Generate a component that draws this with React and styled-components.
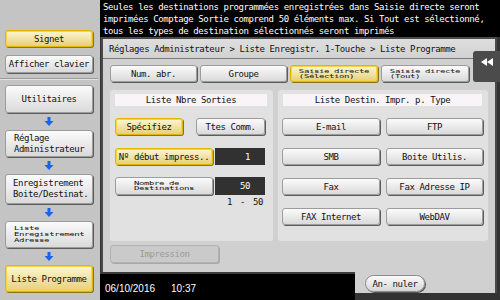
import React from 'react';
import styled, { createGlobalStyle, css } from 'styled-components';

const mono = `"DejaVu Sans Mono", "Liberation Mono", monospace`;

const GlobalStyle = createGlobalStyle`
  html, body {
    margin: 0;
    padding: 0;
    background: #000;
  }
  * {
    box-sizing: border-box;
  }
`;

const messageLines = [
  'Seules les destinations programmées enregistrées dans Saisie directe seront',
  'imprimées Comptage Sortie comprend 50 éléments max. Si Tout est sélectionné,',
  'tous les types de destination sélectionnés seront imprimés',
];

const destTypes = [
  'E-mail',
  'FTP',
  'SMB',
  'Boite Utilis.',
  'Fax',
  'Fax Adresse IP',
  'FAX Internet',
  'WebDAV',
];

const DownArrow = () => (
  <ArrowSlot>
    <svg width="10" height="9" viewBox="0 0 10 9">
      <path d="M3.5 0h3v4h3L5 9 0.5 4h3z" fill="#1b63e8" />
    </svg>
  </ArrowSlot>
);

const App = () => {
  const sidebar = (
    <Sidebar>
      <Key $gold $h={17}>Signet</Key>
      <Key $h={18} $mt={8}>Afficher clavier</Key>
      <Divider />
      <Key $h={28}>Utilitaires</Key>
      <DownArrow />
      <Key $h={27} $left>
        <TwoLines>
          Réglage
          <br />
          Administrateur
        </TwoLines>
      </Key>
      <DownArrow />
      <Key $h={30} $left $pl={7}>
        <TwoLines>
          Enregistrement
          <br />
          Boite/Destinat.
        </TwoLines>
      </Key>
      <DownArrow />
      <Key $h={27} $left>
        <Squash $lh={9.5}>{'Liste\nEnregistrement\nAdresse'}</Squash>
      </Key>
      <DownArrow />
      <Key $gold $h={27}>Liste Programme</Key>
    </Sidebar>
  );

  const tabs = (
    <TabRow>
      <Key $w={87}>Num. abr.</Key>
      <Key $w={87}>Groupe</Key>
      <Key $w={88} $gold>
        <Squash>{'Saisie directe\n(Sélection)'}</Squash>
      </Key>
      <Key $w={88}>
        <Squash>{'Saisie directe\n(Tout)'}</Squash>
      </Key>
    </TabRow>
  );

  const countPanel = (
    <InnerPanel $w={163}>
      <PanelHeader>Liste Nbre Sorties</PanelHeader>
      <ButtonPair>
        <Key $gold $w={68}>Spécifiez</Key>
        <Key $w={69}>Ttes Comm.</Key>
      </ButtonPair>
      <ValueRow $mt={13}>
        <Key $gold $w={98}>Nº début impress..</Key>
        <ValueBox>1</ValueBox>
      </ValueRow>
      <ValueRow $mt={12}>
        <Key $w={98} $h={18}>
          <Squash>{'Nombre de\nDestinations'}</Squash>
        </Key>
        <ValueBox $h={18}>50</ValueBox>
      </ValueRow>
      <RangeText>1 - 50</RangeText>
    </InnerPanel>
  );

  const typePanel = (
    <InnerPanel $w={210}>
      <PanelHeader>Liste Destin. Impr. p. Type</PanelHeader>
      <TypeGrid>
        {destTypes.map((t) => (
          <Key key={t}>{t}</Key>
        ))}
      </TypeGrid>
    </InnerPanel>
  );

  return (
    <Screen>
      <GlobalStyle />
      {sidebar}
      <Main>
        <Message>
          {messageLines.map((l) => (
            <div key={l}>{l}</div>
          ))}
        </Message>
        <Panel>
          <TitleBar>Réglages Administrateur &gt; Liste Enregistr. 1-Touche &gt; Liste Programme</TitleBar>
          <CollapseTab>
            <svg width="12" height="8" viewBox="0 0 12 8">
              <path d="M6 0v8L0 4z M12 0v8L6 4z" fill="#fff" />
            </svg>
          </CollapseTab>
          <PanelBody>
            {tabs}
            <Columns>
              {countPanel}
              {typePanel}
            </Columns>
            <Key $w={109} $h={18} $mt={4} $disabled>Impression</Key>
          </PanelBody>
        </Panel>
        <Footer>
          <StatusBar>
            <span>06/10/2016</span>
            <span>10:37</span>
          </StatusBar>
          <CancelArea>
            <CancelButton>An- nuler</CancelButton>
          </CancelArea>
        </Footer>
      </Main>
    </Screen>
  );
};

export default App;

//////////////////////// layout //////////////////////////

const Screen = styled.div`
  width: 500px;
  height: 300px;
  display: grid;
  grid-template-columns: 100px 400px;
  overflow: hidden;
  font-family: ${mono};
  font-size: 9px;
  letter-spacing: -0.4px;
  color: #111;
`;

//////////////////////// sidebar //////////////////////////

const Sidebar = styled.aside`
  background: #c4c4c4;
  display: flex;
  flex-direction: column;
  padding: 30px 7px 0 5px;
`;

const Divider = styled.div`
  margin: 5px -5px 5px -5px;
  border-top: 1px solid #9a9a9a;
  border-bottom: 1px solid #e2e2e2;
`;

const ArrowSlot = styled.div`
  height: 17px;
  display: flex;
  align-items: center;
  justify-content: center;
`;

const TwoLines = styled.span`
  line-height: 11px;
  text-align: left;
`;

const Squash = styled.span`
  display: inline-block;
  white-space: pre;
  text-align: left;
  line-height: ${(p) => p.$lh || 8}px;
  transform: scaleY(0.62);
`;

//////////////////////// buttons //////////////////////////

const Key = styled.button`
  flex: none;
  width: ${(p) => (p.$w ? `${p.$w}px` : '100%')};
  height: ${(p) => p.$h || 17}px;
  margin: ${(p) => p.$mt || 0}px 0 0 0;
  padding: 0 0 0 ${(p) => (p.$left ? p.$pl || 8 : 0)}px;
  display: flex;
  align-items: center;
  justify-content: ${(p) => (p.$left ? 'flex-start' : 'center')};
  font-family: ${mono};
  font-size: 9px;
  letter-spacing: -0.4px;
  color: #111;
  border-radius: 3px;
  border: 1px solid #9c9c9c;
  background: linear-gradient(#fbfbfb, #dadada);
  box-shadow: 1px 1px 0 #5c5c5c;
  white-space: nowrap;
  ${(p) =>
    p.$gold &&
    css`
      border: 1px solid #e0b600;
      background: linear-gradient(#fdf6d2, #e7d07c);
      box-shadow: 1px 1px 0 #8a7420, inset 0 0 0 1px #f5d642;
    `}
  ${(p) =>
    p.$disabled &&
    css`
      color: #9a9a9a;
      border: 1px solid #b2b2b2;
      background: #cacaca;
      box-shadow: 1px 1px 0 #a8a8a8;
    `}
`;

//////////////////////// main //////////////////////////

const Main = styled.main`
  display: flex;
  flex-direction: column;
  background: #333;
`;

const Message = styled.div`
  height: 37px;
  background: #000;
  color: #fff;
  padding: 1px 3px;
  line-height: 12px;
  white-space: nowrap;
`;

const Panel = styled.section`
  position: relative;
  flex: 1;
  margin: 0 3px 0 1px;
  border: 2px solid #4a4a4a;
  border-bottom: none;
  background: #d0d0d0;
`;

const TitleBar = styled.header`
  height: 20px;
  display: flex;
  align-items: center;
  padding-left: 6px;
  background: linear-gradient(#dedede, #d2d2d2);
  border-bottom: 1px solid #7a7a7a;
  white-space: nowrap;
`;

const CollapseTab = styled.div`
  position: absolute;
  top: 12px;
  right: -5px;
  width: 27px;
  height: 31px;
  background: #4b4b4b;
  border-radius: 3px 0 0 3px;
  display: flex;
  align-items: center;
  justify-content: center;
  padding-bottom: 10px;
`;

const PanelBody = styled.div`
  padding: 6px 0 0 7px;
`;

const TabRow = styled.div`
  display: flex;
  gap: 3px;
`;

const Columns = styled.div`
  margin-top: 8px;
  display: flex;
  gap: 5px;
  height: 151px;
`;

const InnerPanel = styled.div`
  width: ${(p) => p.$w}px;
  background: #e1e1e1;
  border-radius: 3px;
  padding: 4px 3px 0 5px;
`;

const PanelHeader = styled.div`
  height: 12px;
  width: calc(100% - 3px);
  background: #f8f4f8;
  display: flex;
  align-items: center;
  justify-content: center;
`;

const ButtonPair = styled.div`
  margin-top: 12px;
  display: flex;
  gap: 13px;
`;

const ValueRow = styled.div`
  margin-top: ${(p) => p.$mt}px;
  display: flex;
  gap: 2px;
`;

const ValueBox = styled.div`
  width: 50px;
  height: ${(p) => p.$h || 17}px;
  background: #313131;
  color: #fff;
  display: flex;
  align-items: center;
  justify-content: flex-end;
  padding-right: 15px;
`;

const RangeText = styled.div`
  margin: 2px 0 0 105px;
  width: 50px;
  text-align: center;
  word-spacing: 3px;
`;

const TypeGrid = styled.div`
  margin: 12px 0 0 -1px;
  display: grid;
  grid-template-columns: 98px 97px;
  column-gap: 6px;
  row-gap: 13px;
`;

//////////////////////// footer //////////////////////////

const Footer = styled.footer`
  height: 28px;
  display: flex;
`;

const StatusBar = styled.div`
  width: 255px;
  background: #000;
  border-top: 2px solid #3c3c3c;
  color: #fff;
  font-family: "Liberation Sans", Arial, sans-serif;
  font-size: 10px;
  letter-spacing: 0;
  display: flex;
  align-items: center;
  gap: 16px;
  padding: 2px 0 0 5px;
`;

const CancelArea = styled.div`
  flex: 1;
  height: 21px;
  margin-right: 3px;
  background: #d0d0d0;
  border-right: 2px solid #4a4a4a;
  padding: 3px 0 0 10px;
`;

const CancelButton = styled.button`
  width: 60px;
  height: 17px;
  padding: 0;
  border-radius: 9px;
  border: 1px solid #8a8a8a;
  background: linear-gradient(#fbfbfb, #d6d6d6);
  box-shadow: 1px 1px 0 #555;
  font-family: ${mono};
  font-size: 9px;
  letter-spacing: -0.4px;
  color: #111;
`;
